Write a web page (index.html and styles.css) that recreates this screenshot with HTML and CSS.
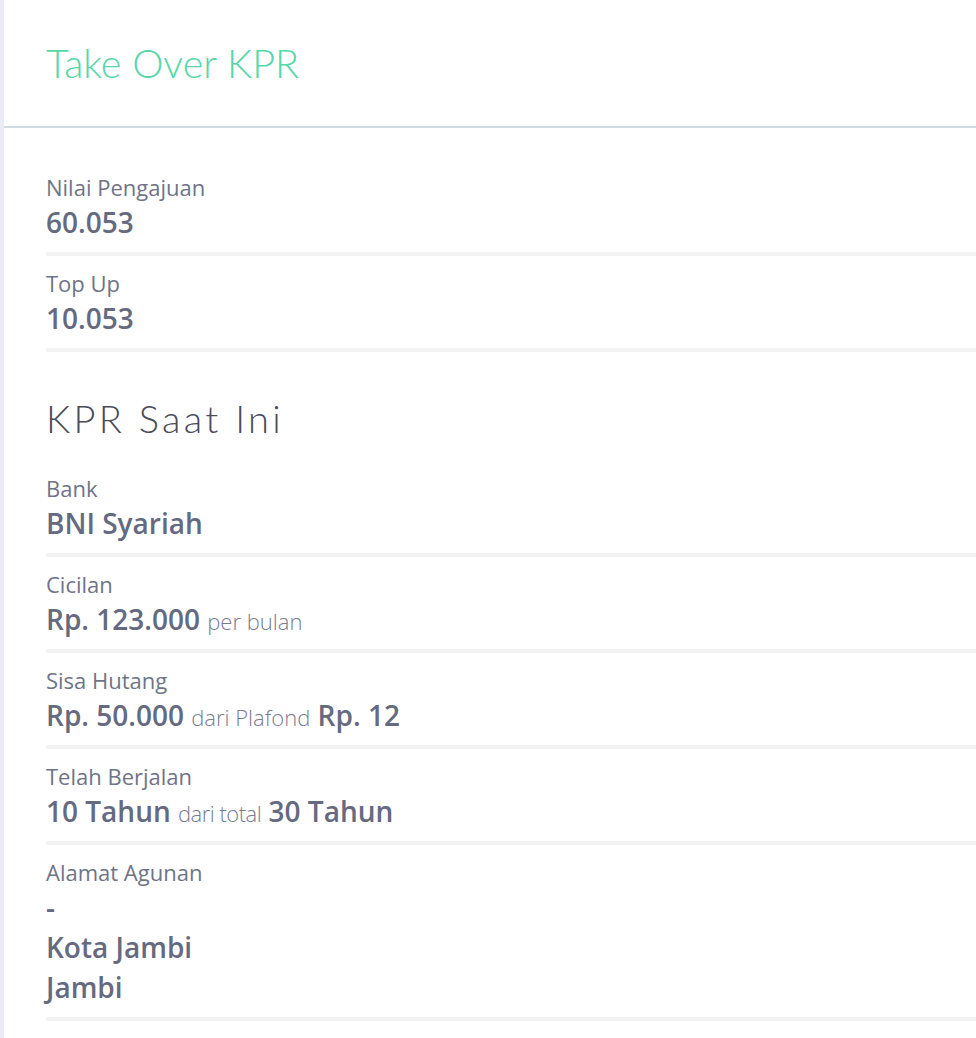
FILE: index.html
```html
<!DOCTYPE html>
<html lang="id">
<head>
<meta charset="utf-8">
<title>Take Over KPR</title>
<link rel="stylesheet" href="styles.css">
</head>
<body>
<div class="page">
  <header class="header">
    <h1 class="title">Take Over KPR</h1>
  </header>
  <main class="content">
    <div class="item">
      <div class="label">Nilai Pengajuan</div>
      <div class="value">60.053</div>
    </div>
    <div class="item">
      <div class="label">Top Up</div>
      <div class="value">10.053</div>
    </div>
    <h2 class="section-title">KPR Saat Ini</h2>
    <div class="item">
      <div class="label">Bank</div>
      <div class="value">BNI Syariah</div>
    </div>
    <div class="item">
      <div class="label">Cicilan</div>
      <div class="value">Rp. 123.000 <span class="muted">per bulan</span></div>
    </div>
    <div class="item">
      <div class="label">Sisa Hutang</div>
      <div class="value">Rp. 50.000 <span class="muted">dari Plafond</span> Rp. 12</div>
    </div>
    <div class="item">
      <div class="label">Telah Berjalan</div>
      <div class="value">10 Tahun <span class="muted tight">dari total</span> 30 Tahun</div>
    </div>
    <div class="item">
      <div class="label">Alamat Agunan</div>
      <div class="value">-<br>Kota Jambi<br>Jambi</div>
    </div>
  </main>
</div>
</body>
</html>
```
FILE: styles.css
```css
html, body {
  margin: 0;
  padding: 0;
  background: #ffffff;
}

.page {
  min-height: 1038px;
  border-left: 4px solid #ebebf5;
  box-sizing: border-box;
}

.header {
  height: 126px;
  display: flex;
  align-items: center;
  padding-left: 42px;
  border-bottom: 2px solid #d3dde1;
}

.title {
  margin: 0;
  font-family: "Lato", "Open Sans", sans-serif;
  font-weight: 300;
  font-size: 39.5px;
  line-height: 48px;
  color: #55d7a6;
}

.content {
  padding: 32px 0 0 42px;
}

.item {
  padding: 12px 0 10px;
  border-bottom: 4px solid #f2f2f2;
  font-family: "Open Sans", sans-serif;
}

.label {
  font-size: 22px;
  line-height: 30px;
  color: #6e7488;
  font-weight: 400;
}

.value {
  font-size: 28px;
  line-height: 40px;
  font-weight: 600;
  color: #656a80;
}

.muted {
  font-size: 22px;
  line-height: 1;
  font-weight: 300;
  color: #787d8e;
}

.muted.wide {
  letter-spacing: 0.3px;
}

.muted.tight {
  letter-spacing: -0.5px;
}

.section-title {
  margin: 42px 0 19px;
  font-family: "Lato", "Open Sans", sans-serif;
  font-weight: 300;
  font-size: 38px;
  line-height: 48px;
  letter-spacing: 3.3px;
  color: #4a4b57;
}
```
